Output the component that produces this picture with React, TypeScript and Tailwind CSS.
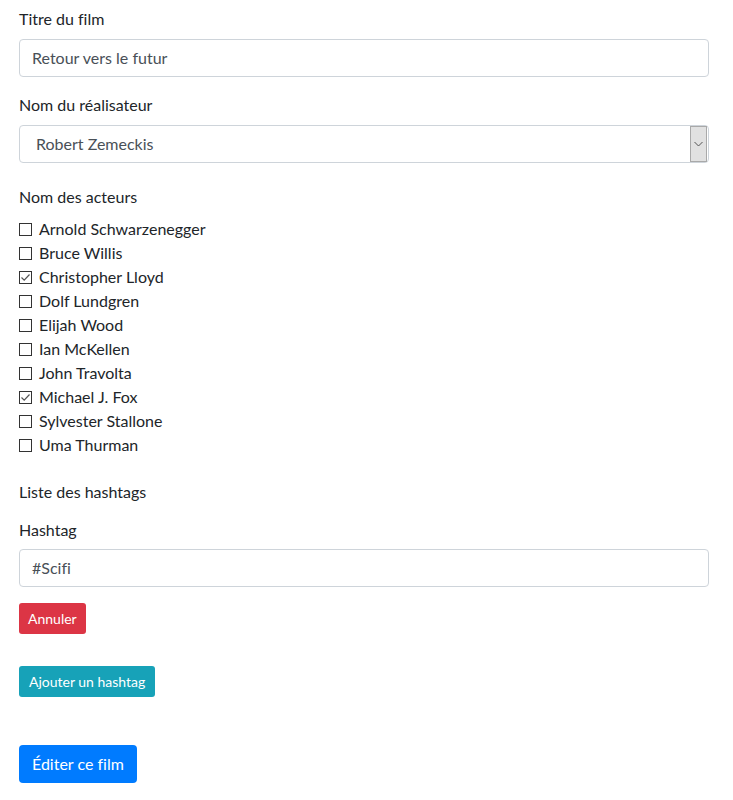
const actors = [
  { name: "Arnold Schwarzenegger", checked: false },
  { name: "Bruce Willis", checked: false },
  { name: "Christopher Lloyd", checked: true },
  { name: "Dolf Lundgren", checked: false },
  { name: "Elijah Wood", checked: false },
  { name: "Ian McKellen", checked: false },
  { name: "John Travolta", checked: false },
  { name: "Michael J. Fox", checked: true },
  { name: "Sylvester Stallone", checked: false },
  { name: "Uma Thurman", checked: false },
];

function CheckBox({ checked }: { checked: boolean }) {
  return (
    <span className="flex h-[13px] w-[13px] shrink-0 items-center justify-center border border-[#333] bg-white">
      {checked && (
        <svg width="11" height="11" viewBox="0 0 11 11" fill="none">
          <path d="M1.5 5.5 L4.2 8.2 L9.5 2.5" stroke="#555" strokeWidth="1.2" />
        </svg>
      )}
    </span>
  );
}

export default function App() {
  return (
    <main
      className="min-h-screen bg-white pl-[19px] pr-[24px] pt-[7px] text-[16px] leading-[24px] text-[#212529] [font-variant-ligatures:none]"
      style={{ fontFamily: "Lato, 'Noto Sans', sans-serif" }}
    >
      <div className="mb-4">
        <label className="mb-2 block">Titre du film</label>
        <div className="flex h-[38px] items-center rounded border border-[#ced4da] px-3 text-[#495057]">
          Retour vers le futur
        </div>
      </div>

      <div>
        <label className="mb-2 block">Nom du réalisateur</label>
        <div className="flex h-[38px] items-center rounded border border-[#ced4da] text-[#495057]">
          <span className="flex-1 pl-4">Robert Zemeckis</span>
          <span className="mr-px flex h-[36px] w-[17px] items-center justify-center border border-[#a9a9a9] bg-[#e1e1e1]">
            <svg width="9" height="6" viewBox="0 0 9 6" fill="none">
              <path d="M0.5 1 L4.5 5 L8.5 1" stroke="#555" strokeWidth="1" />
            </svg>
          </span>
        </div>
      </div>

      <div className="mt-[22px]">
        <label className="mb-2 block">Nom des acteurs</label>
        <div className="flex flex-col">
          {actors.map((a) => (
            <div key={a.name} className="flex h-6 items-center gap-[7px]">
              <CheckBox checked={a.checked} />
              <span>{a.name}</span>
            </div>
          ))}
        </div>
      </div>

      <div className="mt-[23px]">
        <p>Liste des hashtags</p>
        <div className="mt-[14px]">
          <label className="mb-[7px] block">Hashtag</label>
          <div className="flex h-[38px] items-center rounded border border-[#ced4da] px-3 text-[#495057]">
            #Scifi
          </div>
        </div>
        <button className="mt-4 block h-[31px] rounded-[3px] bg-[#dc3545] px-[9px] text-[14px] leading-[21px] text-white">
          Annuler
        </button>
        <button className="mt-8 block h-[31px] rounded-[3px] bg-[#17a2b8] px-[10px] text-[14px] leading-[21px] text-white">
          Ajouter un hashtag
        </button>
      </div>

      <button className="mt-12 block h-[38px] rounded bg-[#007bff] px-[13px] text-white">
        Éditer ce film
      </button>
    </main>
  );
}
